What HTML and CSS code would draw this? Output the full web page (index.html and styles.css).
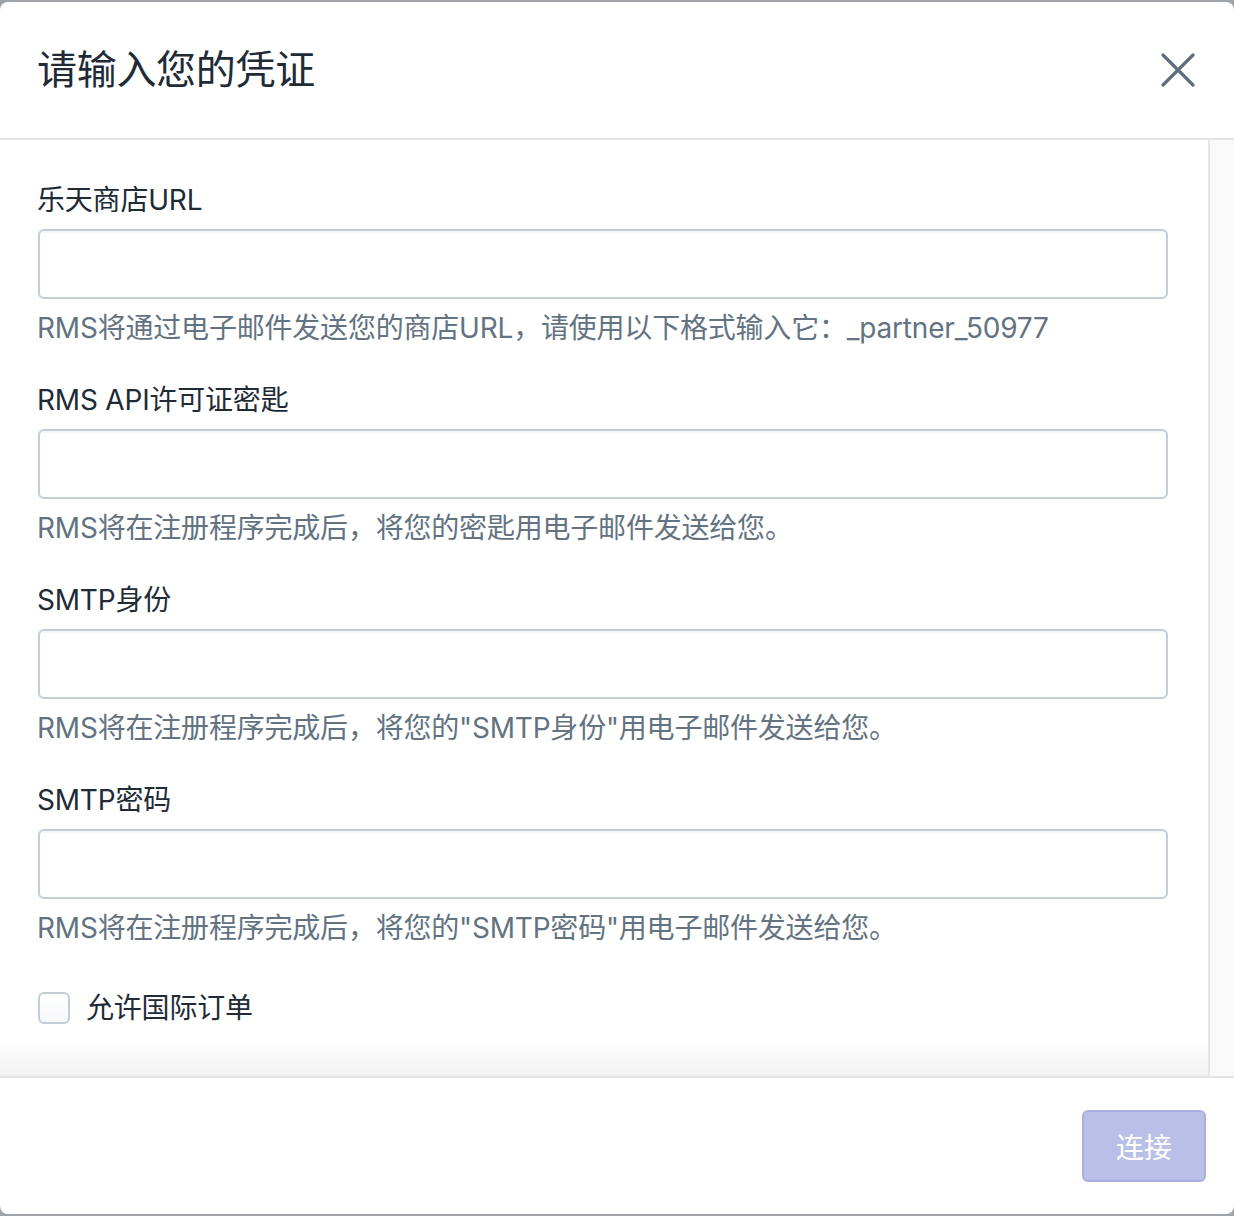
FILE: index.html
```html
<!DOCTYPE html>
<html lang="zh">
<head>
<meta charset="utf-8">
<title>请输入您的凭证</title>
<link rel="stylesheet" href="styles.css">
</head>
<body>
<div class="modal">
  <header class="modal-header">
    <h1 class="modal-title">请输入您的凭证</h1>
    <button class="close" aria-label="关闭">
      <svg width="34" height="34" viewBox="0 0 34 34"><path d="M2 2 L32 32 M32 2 L2 32" stroke="#5f6e7c" stroke-width="3.2" stroke-linecap="round"/></svg>
    </button>
  </header>
  <div class="modal-body">
    <div class="content">
      <div class="field">
        <label class="label">乐天商店URL</label>
        <div class="input"></div>
        <p class="help">RMS将通过电子邮件发送您的商店URL，请使用以下格式输入它：_partner_50977</p>
      </div>
      <div class="field">
        <label class="label">RMS API许可证密匙</label>
        <div class="input"></div>
        <p class="help">RMS将在注册程序完成后，将您的密匙用电子邮件发送给您。</p>
      </div>
      <div class="field">
        <label class="label">SMTP身份</label>
        <div class="input"></div>
        <p class="help">RMS将在注册程序完成后，将您的"SMTP身份"用电子邮件发送给您。</p>
      </div>
      <div class="field">
        <label class="label">SMTP密码</label>
        <div class="input"></div>
        <p class="help">RMS将在注册程序完成后，将您的"SMTP密码"用电子邮件发送给您。</p>
      </div>
      <div class="check-row">
        <span class="checkbox"></span>
        <span class="check-label">允许国际订单</span>
      </div>
    </div>
    <div class="scrollbar"></div>
  </div>
  <footer class="modal-footer">
    <button class="btn-primary">连接</button>
  </footer>
</div>
</body>
</html>
```
FILE: styles.css
```css
html, body {
  margin: 0;
  padding: 0;
}
body {
  background: #a0a3a8;
  font-family: Inter, "Noto Sans CJK SC", sans-serif;
  color: #212b36;
  width: 1234px;
  height: 1216px;
  overflow: hidden;
}
.modal {
  margin-top: 2px;
  height: 1212px;
  background: #fff;
  border-radius: 8px;
  display: flex;
  flex-direction: column;
  overflow: hidden;
}
.modal-header {
  height: 136px;
  flex: none;
  border-bottom: 2px solid #e1e3e6;
  display: flex;
  align-items: center;
  justify-content: space-between;
  padding: 0 38px 0 37px;
}
.modal-title {
  margin: 0;
  font-size: 40px;
  font-weight: 400;
  line-height: 48px;
  color: #212b36;
  letter-spacing: -0.3px;
}
.close {
  border: 0;
  background: none;
  padding: 0;
  width: 34px;
  height: 34px;
  margin-right: 1px;
  display: flex;
}
.modal-body {
  flex: 1;
  display: flex;
  min-height: 0;
}
.content {
  flex: 1;
  padding: 40px 40px 0 37px;
  background: linear-gradient(to bottom, #fff calc(100% - 36px), #f2f2f2 100%);
}
.scrollbar {
  width: 24px;
  flex: none;
  background: #f9f9f9;
  border-left: 2px solid #e6e6e6;
}
.field {
  margin-bottom: 32px;
}
.label {
  display: block;
  font-size: 28px;
  line-height: 40px;
  color: #212b36;
  letter-spacing: -0.2px;
}
.input {
  margin-top: 9px;
  margin-left: 1px;
  height: 66px;
  border: 2px solid #c4cdd5;
  border-radius: 6px;
  background: #fff;
  box-shadow: inset 0 2px 1px rgba(99,115,129,0.06);
}
.help {
  margin: 9px 0 0 0;
  font-size: 28px;
  line-height: 40px;
  color: #637381;
  letter-spacing: -0.2px;
}
.check-row {
  margin-top: 40px;
  margin-left: 1px;
  display: flex;
  align-items: center;
  height: 40px;
}
.checkbox {
  width: 28px;
  height: 28px;
  border: 2px solid #c4cdd5;
  border-radius: 6px;
  background: linear-gradient(to bottom, #fff, #f6f8fa);
  margin-right: 16px;
}
.check-label {
  font-size: 28px;
  line-height: 40px;
  color: #212b36;
  letter-spacing: -0.2px;
}
.modal-footer {
  height: 136px;
  flex: none;
  border-top: 2px solid #e1e3e6;
  display: flex;
  align-items: center;
  justify-content: flex-end;
  padding-right: 28px;
}
.btn-primary {
  width: 124px;
  height: 72px;
  border: 2px solid #a9afe0;
  border-radius: 6px;
  background: #babfe7;
  color: #fff;
  font-family: Inter, "Noto Sans CJK SC", sans-serif;
  font-size: 28px;
  padding: 0;
}
```
